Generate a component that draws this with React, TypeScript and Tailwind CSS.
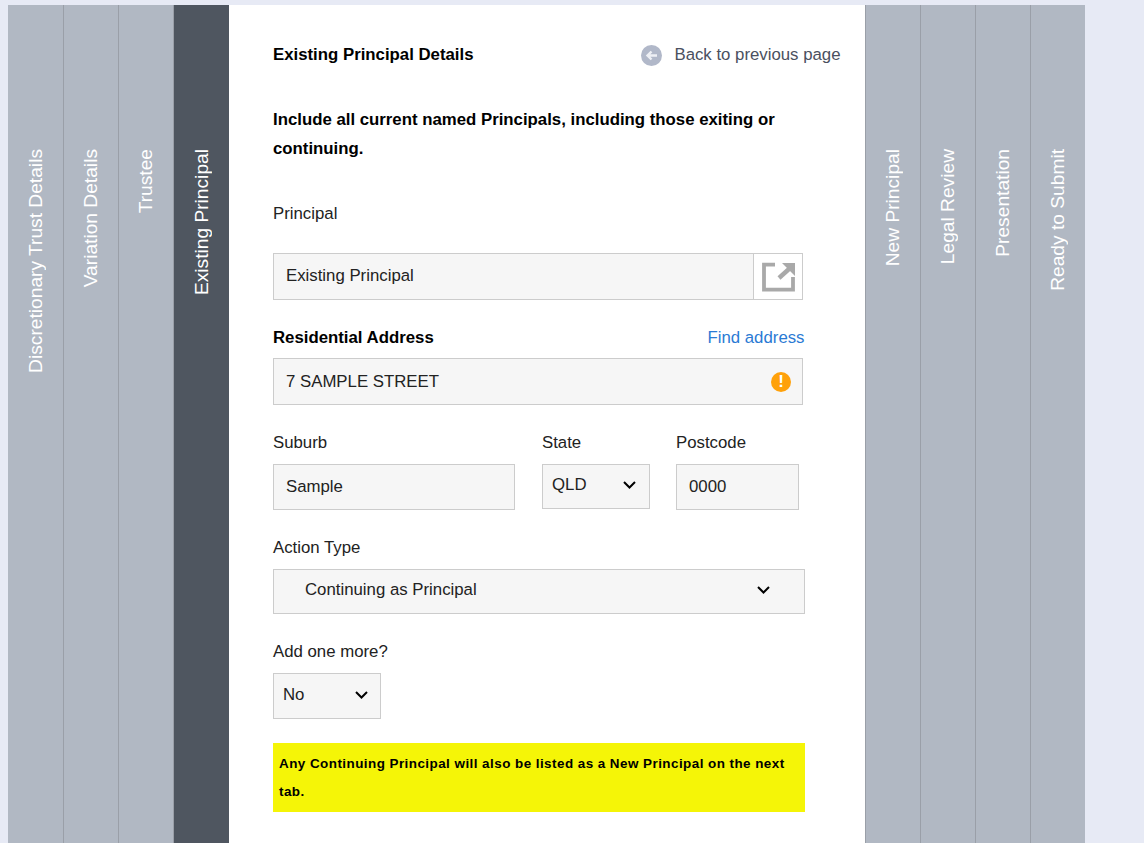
const leftTabs = ["Discretionary Trust Details", "Variation Details", "Trustee"]
const rightTabs = ["New Principal", "Legal Review", "Presentation", "Ready to Submit"]

function Tab({ label, active, side, first }: { label: string; active?: boolean; side?: "l" | "r"; first?: boolean }) {
    return (
        <div
            className={
                "shrink-0 pt-[144px] flex justify-center text-white text-[19.2px] " +
                (first ? "w-[56px] " : "w-[55px] ") +
                (active ? "bg-[#4f5660] " : "bg-[#b1b8c3] ") +
                (side === "l" ? "border-r border-[#9a9fa8] " : "") +
                (side === "r" ? "border-l border-[#9a9fa8] " : "")
            }
        >
            <span className="[writing-mode:vertical-rl] rotate-180 whitespace-nowrap h-max leading-[20px]">{label}</span>
        </div>
    )
}

const inputBox = "bg-[#f6f6f6] border border-[#cccccc] text-[#222222]"

function Chevron() {
    return (
        <svg width="13" height="8" viewBox="0 0 13 8" className="shrink-0">
            <path d="M1 1l5.5 5.5L12 1" fill="none" stroke="#000" strokeWidth="2" />
        </svg>
    )
}

function SelectBox({ value, className }: { value: string; className: string }) {
    return (
        <div className={inputBox + " flex items-center justify-between " + className}>
            <span>{value}</span>
            <Chevron />
        </div>
    )
}

export default function App() {
    return (
        <div className="h-[843px] overflow-hidden bg-[#e7eaf5] pt-[5px] pl-[8px] font-['Liberation_Sans',Arial,sans-serif]">
            <div className="flex h-[838px] w-[1077px]">
                {leftTabs.map((t, i) => (
                    <Tab key={t} label={t} side="l" first={i === 0} />
                ))}
                <Tab label="Existing Principal" active />
                <main className="w-[636px] shrink-0 bg-white pl-[44px] pr-[24px] pt-[40px] text-[16.8px] text-[#222222]">
                    <div className="flex items-center justify-between h-[20px]">
                        <h2 className="font-bold text-black">Existing Principal Details</h2>
                        <a className="flex items-center gap-[12px] text-[#4a5060] mr-[0.5px]">
                            <svg width="21" height="21" viewBox="0 0 21 21">
                                <circle cx="10.5" cy="10.5" r="10.5" fill="#b1b8c9" />
                                <path d="M16 10.5H6.5M10.5 6.5l-4 4 4 4" fill="none" stroke="#eef0f5" strokeWidth="2.4" />
                            </svg>
                            Back to previous page
                        </a>
                    </div>
                    <p className="mt-[40px] w-[540px] font-bold text-black leading-[29px]">
                        Include all current named Principals, including those exiting or continuing.
                    </p>
                    <div className="mt-[41px] leading-[20px]">Principal</div>
                    <div className={inputBox + " mt-[29px] w-[530px] h-[47px] flex items-center"}>
                        <span className="flex-1 pl-[12px] pb-[2px]">Existing Principal</span>
                        <div className="w-[49px] h-full bg-white border-l border-[#cccccc] flex items-center justify-center">
                            <svg width="33" height="31" viewBox="0 0 33 31">
                                <path d="M13 3.7H2v25h29V16" fill="none" stroke="#a9a9a9" strokeWidth="3.8" />
                                <path d="M20 2h13v13z" fill="#a9a9a9" />
                                <path d="M27 8l-10 9" fill="none" stroke="#a9a9a9" strokeWidth="4.4" />
                            </svg>
                        </div>
                    </div>
                    <div className="mt-[28px] w-[532px] flex justify-between leading-[20px]">
                        <span className="font-bold text-black">Residential Address</span>
                        <a className="text-[#2a7ad4] mr-[0.5px]">Find address</a>
                    </div>
                    <div className={inputBox + " mt-[10px] w-[530px] h-[47px] flex items-center justify-between pl-[12px] pr-[11px]"}>
                        <span>7 SAMPLE STREET</span>
                        <span className="w-[20px] h-[20px] rounded-full bg-[#ffa10a] text-white font-bold text-[17px] flex items-center justify-center">!</span>
                    </div>
                    <div className="mt-[28px] flex">
                        <div className="w-[269px]">
                            <div className="leading-[20px]">Suburb</div>
                            <div className={inputBox + " mt-[11px] w-[242px] h-[46px] flex items-center pl-[12px]"}>Sample</div>
                        </div>
                        <div className="w-[134px]">
                            <div className="leading-[20px]">State</div>
                            <SelectBox value="QLD" className="mt-[11px] w-[108px] h-[45px] pl-[9px] pr-[13px] pb-[4px]" />
                        </div>
                        <div>
                            <div className="leading-[20px]">Postcode</div>
                            <div className={inputBox + " mt-[11px] w-[123px] h-[46px] flex items-center pl-[12px]"}>0000</div>
                        </div>
                    </div>
                    <div className="mt-[28px] leading-[20px]">Action Type</div>
                    <SelectBox value="Continuing as Principal" className="mt-[11px] w-[532px] h-[45px] pl-[31px] pr-[34px] pb-[4px]" />
                    <div className="mt-[28px] leading-[20px]">Add one more?</div>
                    <SelectBox value="No" className="mt-[11px] w-[108px] h-[46px] pl-[9px] pr-[12px] pb-[3px]" />
                    <div className="mt-[24px] w-[532px] h-[69px] bg-[#f5f507] px-[6px] pt-[7px] text-[13.44px] font-bold text-black leading-[28px] tracking-[0.45px]">
                        Any Continuing Principal will also be listed as a New Principal on the next tab.
                    </div>
                </main>
                {rightTabs.map(t => (
                    <Tab key={t} label={t} side="r" />
                ))}
            </div>
        </div>
    )
}
